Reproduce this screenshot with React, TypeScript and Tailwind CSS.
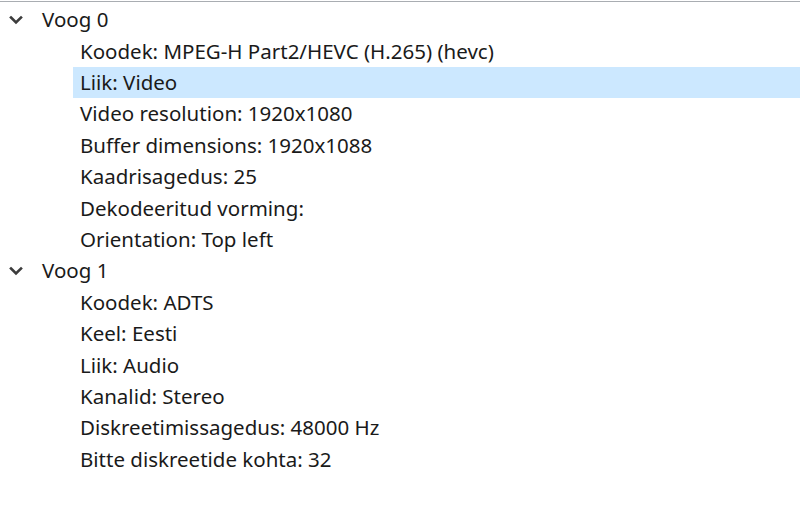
type Stream = {
  title: string;
  items: string[];
  selected?: number;
};

const streams: Stream[] = [
  {
    title: 'Voog 0',
    selected: 1,
    items: [
      'Koodek: MPEG-H Part2/HEVC (H.265) (hevc)',
      'Liik: Video',
      'Video resolution: 1920x1080',
      'Buffer dimensions: 1920x1088',
      'Kaadrisagedus: 25',
      'Dekodeeritud vorming:',
      'Orientation: Top left',
    ],
  },
  {
    title: 'Voog 1',
    items: [
      'Koodek: ADTS',
      'Keel: Eesti',
      'Liik: Audio',
      'Kanalid: Stereo',
      'Diskreetimissagedus: 48000 Hz',
      'Bitte diskreetide kohta: 32',
    ],
  },
];

// expand arrow of the tree view
const Chevron = () => (
  <svg width="14" height="10" viewBox="0 0 14 10" className="text-[#3c3c3c]">
    <polyline
      points="2,2.5 7,7.5 12,2.5"
      fill="none"
      stroke="currentColor"
      strokeWidth="2.6"
      strokeLinecap="square"
    />
  </svg>
);

const App = () => {
  return (
    <div
      className="w-[800px] h-[525px] bg-white pt-px text-[20.5px] text-[#1a1a1a] overflow-hidden"
      style={{ fontFamily: '"Noto Sans", "Open Sans", sans-serif' }}
    >
      <div className="h-px bg-[#a9adb2]" />
      <ul className="pt-[2px]">
        {streams.map((s) => (
          <li key={s.title}>
            <div className="h-[31.4px] flex items-center">
              <span className="w-[42px] pl-[9px] flex items-center">
                <Chevron />
              </span>
              <span>{s.title}</span>
            </div>
            <ul>
              {s.items.map((item, i) => (
                <li
                  key={item}
                  className={
                    'h-[31.4px] ml-[73px] pl-[7px] flex items-center ' +
                    (i === s.selected ? 'bg-[#cce8ff]' : '')
                  }
                >
                  {item}
                </li>
              ))}
            </ul>
          </li>
        ))}
      </ul>
    </div>
  );
};

export default App;
